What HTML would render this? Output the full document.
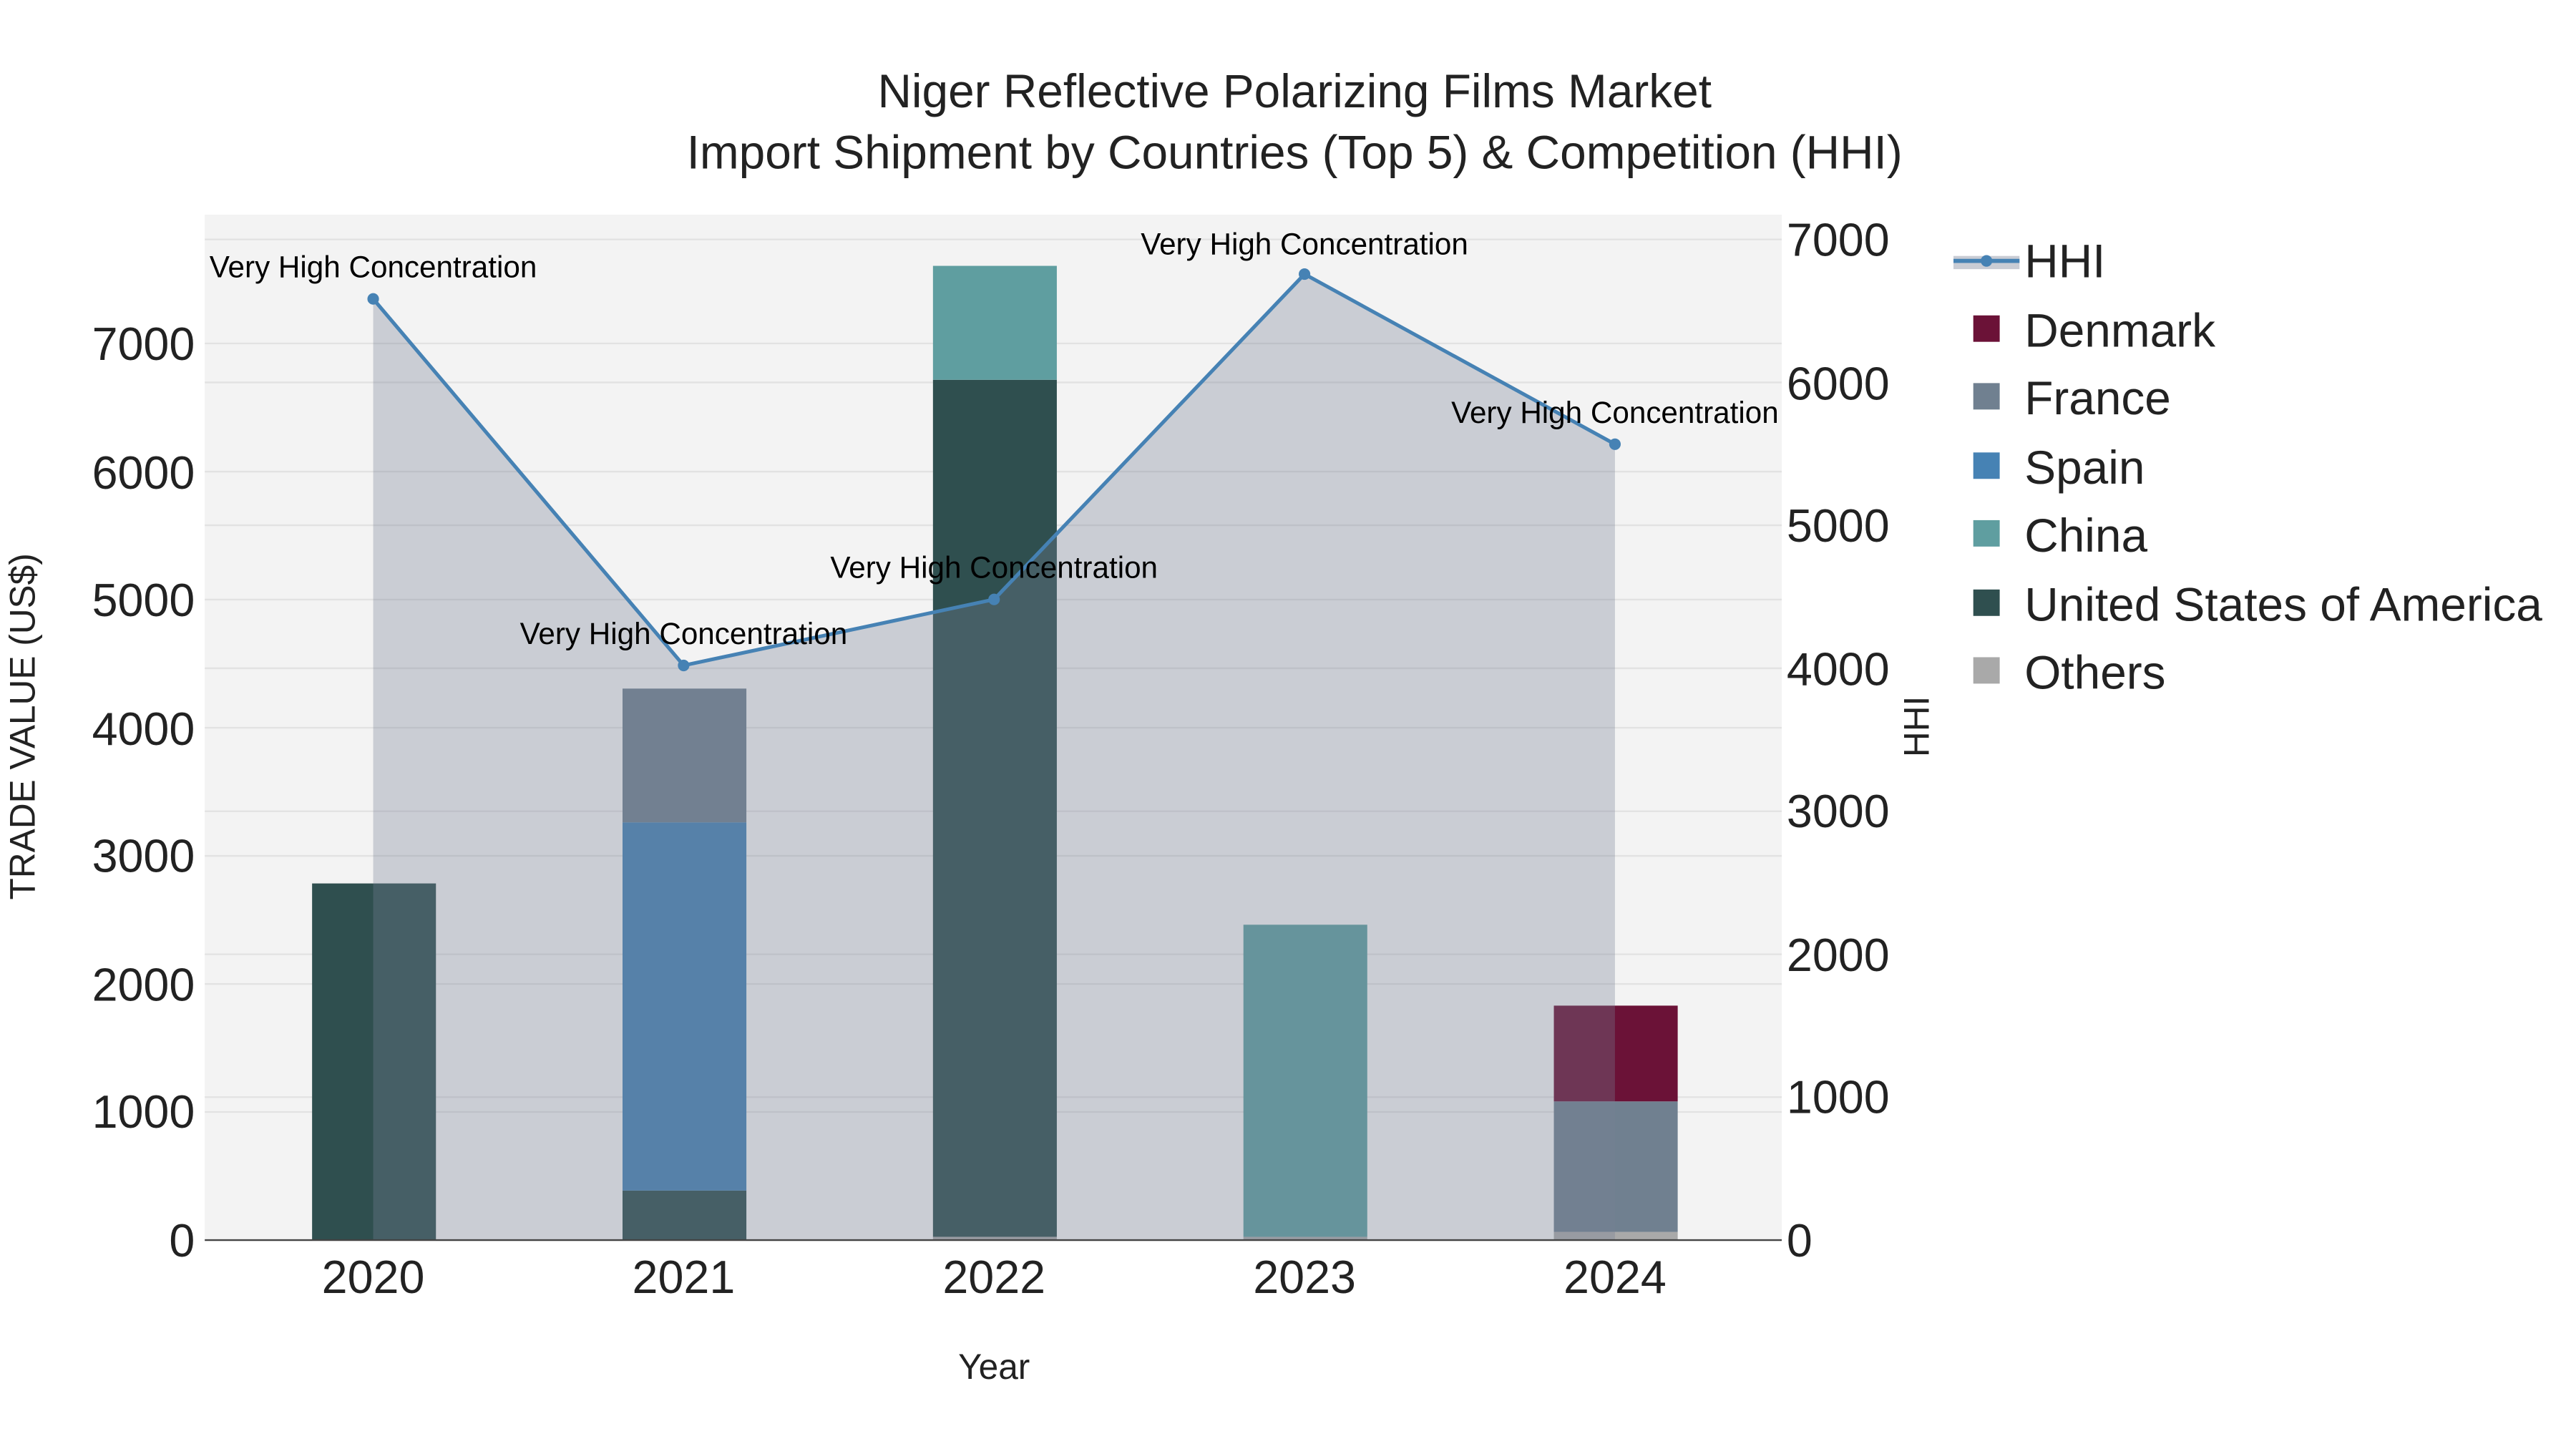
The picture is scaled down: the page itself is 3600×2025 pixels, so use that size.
<!DOCTYPE html>
<html><head><meta charset="utf-8"><style>
html,body{margin:0;padding:0;background:#fff;width:3600px;height:2025px;overflow:hidden}
svg{display:block}
text{font-family:"Liberation Sans",sans-serif}
</style></head><body>
<svg width="3600" height="2025" viewBox="0 0 1560 877.5" xmlns="http://www.w3.org/2000/svg">
<rect x="0" y="0" width="1560" height="877.5" fill="#fff"/>
<rect x="124" y="130" width="955" height="621" fill="#f3f3f3"/>
<g stroke="#e2e2e2" stroke-width="1">
<line x1="124" x2="1079" y1="673.4" y2="673.4"/>
<line x1="124" x2="1079" y1="595.9" y2="595.9"/>
<line x1="124" x2="1079" y1="518.3" y2="518.3"/>
<line x1="124" x2="1079" y1="440.7" y2="440.7"/>
<line x1="124" x2="1079" y1="363.1" y2="363.1"/>
<line x1="124" x2="1079" y1="285.6" y2="285.6"/>
<line x1="124" x2="1079" y1="208" y2="208"/>
<line x1="124" x2="1079" y1="664.4" y2="664.4"/>
<line x1="124" x2="1079" y1="577.9" y2="577.9"/>
<line x1="124" x2="1079" y1="491.3" y2="491.3"/>
<line x1="124" x2="1079" y1="404.7" y2="404.7"/>
<line x1="124" x2="1079" y1="318.1" y2="318.1"/>
<line x1="124" x2="1079" y1="231.6" y2="231.6"/>
<line x1="124" x2="1079" y1="145" y2="145"/>
</g>
<rect x="189" y="535" width="75" height="216" fill="#2f4f4f"/>
<rect x="377" y="721" width="75" height="30" fill="#2f4f4f"/>
<rect x="377" y="498" width="75" height="223" fill="#4682b4"/>
<rect x="377" y="417" width="75" height="81" fill="#708090"/>
<rect x="565" y="749" width="75" height="2" fill="#a9a9a9"/>
<rect x="565" y="230" width="75" height="519" fill="#2f4f4f"/>
<rect x="565" y="161" width="75" height="69" fill="#5f9ea0"/>
<rect x="753" y="749" width="75" height="2" fill="#a9a9a9"/>
<rect x="753" y="560" width="75" height="189" fill="#5f9ea0"/>
<rect x="941" y="746" width="75" height="5" fill="#a9a9a9"/>
<rect x="941" y="667" width="75" height="79" fill="#708090"/>
<rect x="941" y="609" width="75" height="58" fill="#6b1237"/>
<path d="M226,751 L226,181 L414,403 L602,363 L790,166 L978,269 L978,751 Z" fill="rgb(119,127,148)" fill-opacity="0.33"/>
<path d="M226,181 L414,403 L602,363 L790,166 L978,269" fill="none" stroke="#4682b4" stroke-width="2.2"/>
<g fill="#4682b4"><circle cx="226" cy="181" r="3.5"/><circle cx="414" cy="403" r="3.5"/><circle cx="602" cy="363" r="3.5"/><circle cx="790" cy="166" r="3.5"/><circle cx="978" cy="269" r="3.5"/></g>
<line x1="124" x2="1079" y1="751" y2="751" stroke="#444" stroke-width="1"/>
<g font-size="18.3" fill="#000" text-anchor="middle">
<text x="226" y="168">Very High Concentration</text>
<text x="414" y="390">Very High Concentration</text>
<text x="602" y="350">Very High Concentration</text>
<text x="790" y="154">Very High Concentration</text>
<text x="978" y="256">Very High Concentration</text>
</g>
<g font-size="28.5" fill="#222" text-anchor="middle">
<text x="784" y="65">Niger Reflective Polarizing Films Market</text>
<text x="784" y="102">Import Shipment by Countries (Top 5) &amp; Competition (HHI)</text>
</g>
<g font-size="28" fill="#222" text-anchor="end">
<text x="118" y="761">0</text>
<text x="118" y="683">1000</text>
<text x="118" y="606">2000</text>
<text x="118" y="528">3000</text>
<text x="118" y="451">4000</text>
<text x="118" y="373">5000</text>
<text x="118" y="296">6000</text>
<text x="118" y="218">7000</text>
</g>
<g font-size="28" fill="#222" text-anchor="start">
<text x="1082" y="761">0</text>
<text x="1082" y="674">1000</text>
<text x="1082" y="588">2000</text>
<text x="1082" y="501">3000</text>
<text x="1082" y="415">4000</text>
<text x="1082" y="328">5000</text>
<text x="1082" y="242">6000</text>
<text x="1082" y="155">7000</text>
</g>
<g font-size="28" fill="#222" text-anchor="middle">
<text x="226" y="783">2020</text>
<text x="414" y="783">2021</text>
<text x="602" y="783">2022</text>
<text x="790" y="783">2023</text>
<text x="978" y="783">2024</text>
</g>
<text x="602" y="835" font-size="21.5" fill="#222" text-anchor="middle">Year</text>
<text transform="translate(21,440) rotate(-90)" font-size="21.5" fill="#222" text-anchor="middle">TRADE VALUE (US$)</text>
<text transform="translate(1168,440) rotate(-90)" font-size="21.5" fill="#222" text-anchor="middle">HHI</text>
<rect x="1183" y="155" width="40" height="8" fill="rgb(119,127,148)" fill-opacity="0.4"/>
<line x1="1183" x2="1223" y1="158" y2="158" stroke="#4682b4" stroke-width="2.5"/>
<circle cx="1203" cy="158" r="3.5" fill="#4682b4"/>
<rect x="1195" y="191" width="16" height="16" fill="#6b1237"/>
<rect x="1195" y="232" width="16" height="16" fill="#708090"/>
<rect x="1195" y="274" width="16" height="16" fill="#4682b4"/>
<rect x="1195" y="315" width="16" height="16" fill="#5f9ea0"/>
<rect x="1195" y="357" width="16" height="16" fill="#2f4f4f"/>
<rect x="1195" y="398" width="16" height="16" fill="#a9a9a9"/>
<g font-size="28.5" fill="#222">
<text x="1226" y="168">HHI</text>
<text x="1226" y="210">Denmark</text>
<text x="1226" y="251">France</text>
<text x="1226" y="293">Spain</text>
<text x="1226" y="334">China</text>
<text x="1226" y="376">United States of America</text>
<text x="1226" y="417">Others</text>
</g>
</svg>
</body></html>
